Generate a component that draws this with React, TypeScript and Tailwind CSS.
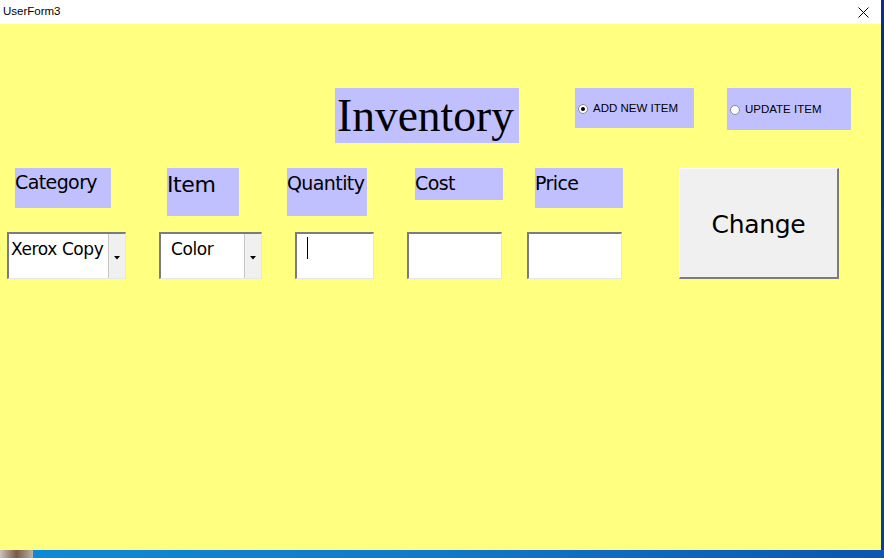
export default function App() {
  const label = "bg-[#c0c0ff] font-['DejaVu_Sans',sans-serif] text-[19px] tracking-[-0.6px] leading-none text-black";
  const box = "bg-white border-t-2 border-l-2 border-t-[#7c7c7c] border-l-[#7c7c7c] border-b border-r border-b-[#e6e6e6] border-r-[#e6e6e6] h-[47px]";

  return (
    <div className="w-[884px] h-[558px] flex flex-col bg-[#1672c4] overflow-hidden">
      {/* window */}
      <div className="flex h-[550px]">
        <div className="w-[881px] flex flex-col">
          {/* title bar */}
          <div className="h-[24px] bg-white flex items-center justify-between pl-[3px] pr-[12px]">
            <span className="font-['Liberation_Sans',sans-serif] text-[11.5px] text-black">UserForm3</span>
            <svg width="11" height="11" viewBox="0 0 11 11">
              <path d="M0.5 0.5 L10.5 10.5 M10.5 0.5 L0.5 10.5" stroke="#000" strokeWidth="1" />
            </svg>
          </div>

          {/* form body */}
          <div className="flex-1 bg-[#ffff80] pt-[64px]">
            {/* top row */}
            <div className="flex items-start h-[80px]">
              <div className="ml-[335px] w-[184px] h-[55px] bg-[#c0c0ff] pl-[2px] pt-[5px] font-['Liberation_Serif',serif] text-[45.5px] leading-none text-black">
                Inventory
              </div>
              <div className="ml-[56px] w-[119px] h-[40px] bg-[#c0c0ff] flex items-center pl-[3px] pt-[1px]">
                <span className="w-[10px] h-[10px] rounded-full bg-white border border-[#8a8a8a] flex items-center justify-center">
                  <span className="w-[4px] h-[4px] rounded-full bg-black" />
                </span>
                <span className="ml-[5px] font-['Liberation_Sans',sans-serif] text-[11.5px] text-black">ADD NEW ITEM</span>
              </div>
              <div className="ml-[33px] w-[124px] h-[42px] bg-[#c0c0ff] flex items-center pl-[3px] pt-[1px]">
                <span className="w-[10px] h-[10px] rounded-full bg-white border border-[#8a8a8a]" />
                <span className="ml-[5px] font-['Liberation_Sans',sans-serif] text-[11.5px] text-black">UPDATE ITEM</span>
              </div>
            </div>

            {/* fields + button */}
            <div className="flex items-start">
              <div className="flex flex-col">
                <div className="flex items-start h-[64px]">
                  <div className={`${label} ml-[15px] w-[96px] h-[40px] pt-[5px]`}>Category</div>
                  <div className="ml-[56px] w-[72px] h-[48px] pt-[6px] bg-[#c0c0ff] font-['DejaVu_Sans',sans-serif] text-[22px] tracking-[-0.4px] leading-none text-black">
                    Item
                  </div>
                  <div className={`${label} ml-[48px] w-[80px] h-[48px] pt-[6px]`}>Quantity</div>
                  <div className={`${label} ml-[48px] w-[88px] h-[32px] pt-[6px]`}>Cost</div>
                  <div className={`${label} ml-[32px] w-[88px] h-[40px] pt-[6px]`}>Price</div>
                </div>
                <div className="flex items-start">
                  <div className={`${box} ml-[7px] w-[119px] flex`}>
                    <div className="flex-1 pl-[2px] pt-[7px] font-['DejaVu_Sans',sans-serif] text-[17px] tracking-[-0.4px] leading-none text-black">
                      Xerox Copy
                    </div>
                    <DropButton />
                  </div>
                  <div className={`${box} ml-[33px] w-[103px] flex`}>
                    <div className="flex-1 pl-[10px] pt-[7px] font-['DejaVu_Sans',sans-serif] text-[17px] tracking-[-0.4px] leading-none text-black">
                      Color
                    </div>
                    <DropButton />
                  </div>
                  <div className={`${box} ml-[33px] w-[79px] pl-[10px] pt-[3px]`}>
                    <div className="w-[1px] h-[22px] bg-black" />
                  </div>
                  <div className={`${box} ml-[33px] w-[95px]`} />
                  <div className={`${box} ml-[25px] w-[95px]`} />
                </div>
              </div>

              <button className="ml-[56px] w-[160px] h-[111px] bg-[#f0f0f0] border-t border-l border-t-[#fafafa] border-l-[#fafafa] border-b-2 border-r-2 border-b-[#7c7c7c] border-r-[#7c7c7c] flex items-center justify-center pt-[3px] font-['DejaVu_Sans',sans-serif] text-[25px] tracking-[-0.3px] text-black">
                Change
              </button>
            </div>
          </div>
        </div>
        <div className="w-[3px] bg-gradient-to-b from-[#0c2f80] to-[#0a3d8f]" />
      </div>

      {/* taskbar strip */}
      <div className="flex h-[8px] bg-gradient-to-r from-[#0f8ad6] via-[#1477c8] to-[#0b56b0]">
        <div className="w-[33px] bg-gradient-to-r from-[#c9c3bd] via-[#7a5a48] to-[#b9b2aa]" />
      </div>
    </div>
  );
}

function DropButton() {
  return (
    <div className="w-[17px] h-full bg-[#f0f0f0] border-l border-[#c8c8c8] flex items-end justify-center pb-[18px]">
      <svg width="6" height="4" viewBox="0 0 6 4">
        <path d="M0 0 L6 0 L3 3.5 Z" fill="#000" />
      </svg>
    </div>
  );
}
